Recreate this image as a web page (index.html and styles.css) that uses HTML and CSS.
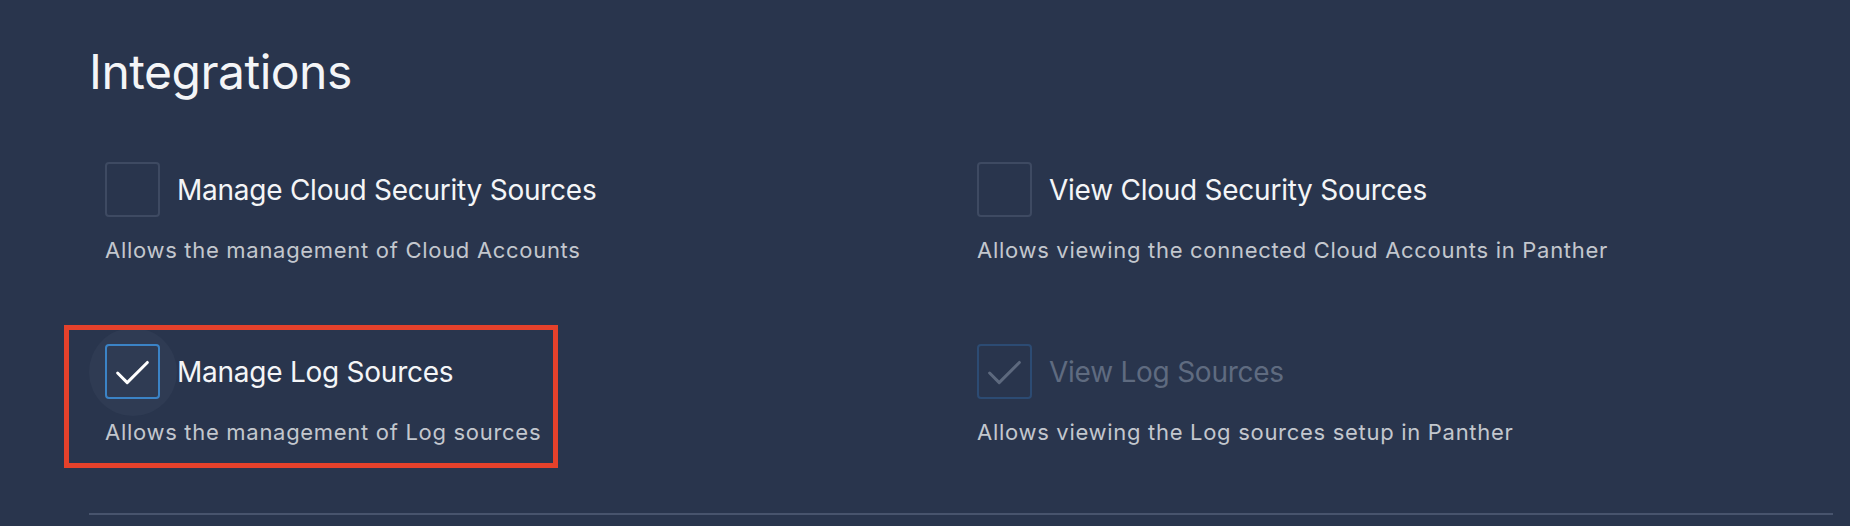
FILE: index.html
```html
<!DOCTYPE html>
<html lang="en">

<head>
    <meta charset="UTF-8">
    <meta name="viewport" content="width=device-width, initial-scale=1.0">
    <title>Integrations</title>
    <link rel="stylesheet" href="styles.css">
</head>

<body>
    <div class="section">
        <h2 class="section-title">Integrations</h2>
        <ul class="perm-list">
            <li class="perm">
                <label class="perm-head">
                    <span class="check"></span>
                    <span class="perm-name">Manage Cloud Security Sources</span>
                </label>
                <p class="perm-desc">Allows the management of Cloud Accounts</p>
            </li>
            <li class="perm">
                <label class="perm-head">
                    <span class="check"></span>
                    <span class="perm-name">View Cloud Security Sources</span>
                </label>
                <p class="perm-desc">Allows viewing the connected Cloud Accounts in Panther</p>
            </li>
            <li class="perm highlight">
                <label class="perm-head">
                    <span class="check checked hover">
                        <svg viewBox="0 0 24 24"><path d="M5 12.5l4.5 4.5L19 7.5"></path></svg>
                    </span>
                    <span class="perm-name">Manage Log Sources</span>
                </label>
                <p class="perm-desc">Allows the management of Log sources</p>
            </li>
            <li class="perm disabled">
                <label class="perm-head">
                    <span class="check checked">
                        <svg viewBox="0 0 24 24"><path d="M5 12.5l4.5 4.5L19 7.5"></path></svg>
                    </span>
                    <span class="perm-name">View Log Sources</span>
                </label>
                <p class="perm-desc">Allows viewing the Log sources setup in Panther</p>
            </li>
        </ul>
        <div class="divider"></div>
    </div>
</body>

</html>
```

FILE: styles.css
```css
body {
    margin: 0;
    background-color: #29354d;
    font-family: Inter, "Noto Sans", sans-serif;
    color: #f4f5f7;
}

ul {
    margin: 0;
    padding: 0;
    list-style: none;
}

.section {
    margin-left: 89px;
    width: 1744px;
    padding-top: 42px;
}

.section-title {
    margin: 0;
    font-size: 48px;
    font-weight: 400;
    line-height: 60px;
    letter-spacing: -0.5px;
}

.perm-list {
    display: grid;
    grid-template-columns: 856px 856px;
    column-gap: 16px;
    row-gap: 79px;
    padding: 0 16px;
    margin-top: 60px;
}

.perm {
    position: relative;
}

.perm-head {
    display: flex;
    align-items: center;
    gap: 17px;
}

.check {
    position: relative;
    flex: 0 0 auto;
    box-sizing: border-box;
    width: 55px;
    height: 55px;
    border: 2px solid #3e4a62;
    border-radius: 4px;
    display: flex;
    align-items: center;
    justify-content: center;
}

.check svg {
    width: 52px;
    height: 52px;
    fill: none;
    stroke: #ffffff;
    stroke-width: 1.4;
    stroke-linecap: round;
    stroke-linejoin: round;
}

.check.checked {
    border-color: #3b83c6;
}

.check.hover::before {
    content: "";
    position: absolute;
    left: 50%;
    top: 50%;
    width: 88px;
    height: 88px;
    margin: -44px 0 0 -44px;
    border-radius: 50%;
    background-color: #2f3b53;
    z-index: -1;
}

.perm-name {
    font-size: 28px;
    letter-spacing: -0.25px;
    line-height: 34px;
}

.perm-desc {
    margin: 18px 0 0;
    font-size: 22px;
    letter-spacing: 0.7px;
    line-height: 30px;
    color: #c3c7ce;
}

.disabled .check {
    border-color: #2c4b73;
}

.disabled .check svg {
    stroke: #5d697e;
}

.disabled .perm-name {
    color: #5f6b80;
}

.highlight::after {
    content: "";
    position: absolute;
    left: -41px;
    top: -19px;
    width: 494px;
    height: 143px;
    box-sizing: border-box;
    border: 5px solid #e5412b;
}

.divider {
    height: 2px;
    margin-top: 66px;
    background-color: #48546d;
}
```
